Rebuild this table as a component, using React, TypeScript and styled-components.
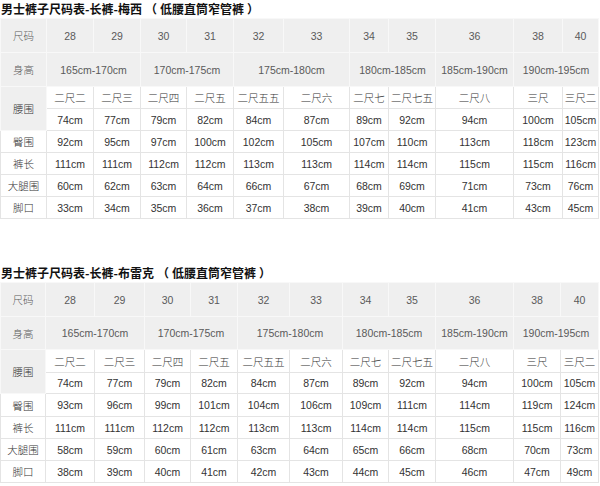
import React from "react";
import styled, { createGlobalStyle } from "styled-components";

const GlobalStyle = createGlobalStyle`
  html, body {
    margin: 0;
    padding: 0;
    background: #ffffff;
  }
  body {
    font-family: "Liberation Sans", Arial, "Noto Sans CJK SC", sans-serif;
  }
`;

const Page = styled.div`
  display: flex;
  flex-direction: column;
  width: 600px;
`;

const Section = styled.section<{ $gap: number }>`
  display: flex;
  flex-direction: column;
  margin-top: ${(p) => p.$gap}px;
`;

const Title = styled.h2`
  margin: 0;
  padding-left: 1px;
  height: 18px;
  line-height: 17px;
  font-size: 12px;
  font-weight: bold;
  color: #111;
  font-family: "Noto Sans CJK SC", "Liberation Sans", sans-serif;
  white-space: nowrap;
`;

const Paren = styled.span`
  margin: 0 3px;
`;

const Table = styled.table`
  width: 598px;
  table-layout: fixed;
  border-collapse: collapse;
`;

const Col = styled.col<{ $w: number }>`
  width: ${(p) => p.$w}px;
`;

const Row = styled.tr<{ $h: number }>`
  height: ${(p) => p.$h}px;
`;

const Cell = styled.td<{ $head?: boolean; $cn?: boolean; $dark?: boolean }>`
  padding: 0;
  text-align: center;
  vertical-align: middle;
  white-space: nowrap;
  overflow: hidden;
  background: ${(p) => (p.$head ? "#efefef" : "#ffffff")};
  border: 1px solid ${(p) => (p.$head ? "#f8f8f8" : "#e4e4e4")};
  color: ${(p) => (p.$head && !p.$dark ? "#5a5a5a" : "#333")};
  font-size: ${(p) => (p.$cn ? "10.5px" : "10.5px")};
  font-family: ${(p) =>
    p.$cn
      ? '"Noto Sans CJK SC", "Liberation Sans", sans-serif'
      : '"Liberation Sans", Arial, sans-serif'};
  font-weight: ${(p) => (p.$cn ? 300 : "normal")};
`;

interface Span {
  text: string;
  span: number;
}

interface SizeTable {
  name: string;
  cols: number[];
  rowH: number[];
  hip: number[];
  length: number[];
  thigh: number[];
  hem: number[];
}

const sizes = [28, 29, 30, 31, 32, 33, 34, 35, 36, 38, 40];
const heights: Span[] = [
  { text: "165cm-170cm", span: 2 },
  { text: "170cm-175cm", span: 2 },
  { text: "175cm-180cm", span: 2 },
  { text: "180cm-185cm", span: 2 },
  { text: "185cm-190cm", span: 1 },
  { text: "190cm-195cm", span: 2 },
];
const waistCn = [
  "二尺二",
  "二尺三",
  "二尺四",
  "二尺五",
  "二尺五五",
  "二尺六",
  "二尺七",
  "二尺七五",
  "二尺八",
  "三尺",
  "三尺二",
];
const waistCm = [74, 77, 79, 82, 84, 87, 89, 92, 94, 100, 105];

const tables: SizeTable[] = [
  {
    name: "梅西",
    cols: [46, 47, 47, 46, 47, 50, 66, 39, 47, 78, 49, 36],
    rowH: [34, 34, 22, 22, 22, 22, 22, 22],
    hip: [92, 95, 97, 100, 102, 105, 107, 110, 113, 118, 123],
    length: [111, 111, 112, 112, 113, 113, 114, 114, 115, 115, 116],
    thigh: [60, 62, 63, 64, 66, 67, 68, 69, 71, 73, 76],
    hem: [33, 34, 35, 36, 37, 38, 39, 40, 41, 43, 45],
  },
  {
    name: "布雷克",
    cols: [45, 49, 50, 46, 47, 52, 53, 46, 47, 78, 47, 38],
    rowH: [34, 33, 23, 21, 23, 22, 22, 22],
    hip: [93, 96, 99, 101, 104, 106, 109, 111, 114, 119, 124],
    length: [111, 111, 112, 112, 113, 113, 114, 114, 115, 115, 116],
    thigh: [58, 59, 60, 61, 63, 64, 65, 66, 68, 70, 73],
    hem: [38, 39, 40, 41, 42, 43, 44, 45, 46, 47, 49],
  },
];

function CmRow({ label, values, h }: { label: string; values: number[]; h: number }) {
  return (
    <Row $h={h}>
      <Cell $cn>{label}</Cell>
      {values.map((v, i) => (
        <Cell key={i}>{v}cm</Cell>
      ))}
    </Row>
  );
}

function Chart({ t }: { t: SizeTable }) {
  const h = t.rowH;
  return (
    <Table>
      <colgroup>
        {t.cols.map((w, i) => (
          <Col key={i} $w={w} />
        ))}
      </colgroup>
      <tbody>
        <Row $h={h[0]}>
          <Cell $head $cn>
            尺码
          </Cell>
          {sizes.map((s) => (
            <Cell $head key={s}>
              {s}
            </Cell>
          ))}
        </Row>
        <Row $h={h[1]}>
          <Cell $head $cn>
            身高
          </Cell>
          {heights.map((r) => (
            <Cell $head key={r.text} colSpan={r.span}>
              {r.text}
            </Cell>
          ))}
        </Row>
        <Row $h={h[2]}>
          <Cell $head $cn $dark rowSpan={2}>
            腰围
          </Cell>
          {waistCn.map((w) => (
            <Cell $cn key={w}>
              {w}
            </Cell>
          ))}
        </Row>
        <Row $h={h[3]}>
          {waistCm.map((v) => (
            <Cell key={v}>{v}cm</Cell>
          ))}
        </Row>
        <CmRow label="臀围" values={t.hip} h={h[4]} />
        <CmRow label="裤长" values={t.length} h={h[5]} />
        <CmRow label="大腿围" values={t.thigh} h={h[6]} />
        <CmRow label="脚口" values={t.hem} h={h[7]} />
      </tbody>
    </Table>
  );
}

function App() {
  return (
    <Page>
      <GlobalStyle />
      {tables.map((t, i) => (
        <Section key={t.name} $gap={i === 0 ? 0 : 45}>
          <Title>
            男士裤子尺码表-长裤-{t.name}
            <Paren>（</Paren>低腰直筒窄管裤<Paren>）</Paren>
          </Title>
          <Chart t={t} />
        </Section>
      ))}
    </Page>
  );
}

export default App;
